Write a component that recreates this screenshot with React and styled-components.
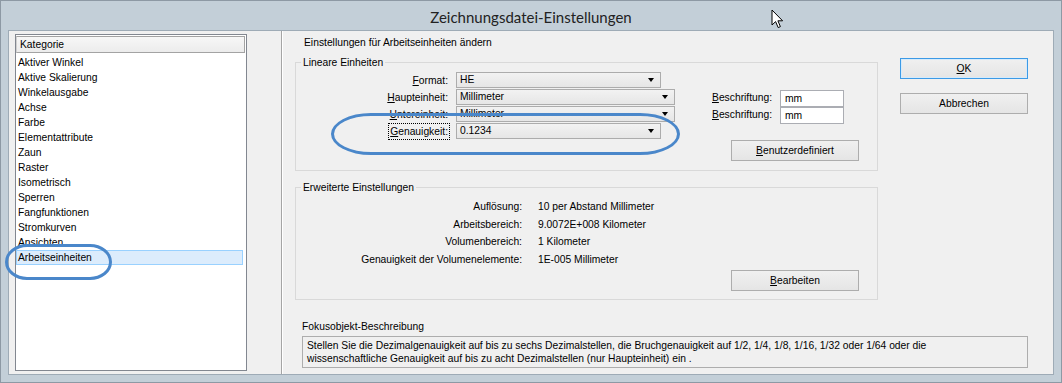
import React from "react"
import styled, { createGlobalStyle } from "styled-components"

const GlobalStyle = createGlobalStyle`
  html, body {
    margin: 0;
    padding: 0;
    background: #c3cfd8;
  }
  * {
    box-sizing: border-box;
  }
`

const Window = styled.div`
  position: relative;
  width: 1062px;
  height: 383px;
  background: #c3cfd8;
  border: 1px solid #8d99a4;
  display: flex;
  flex-direction: column;
  font-family: "Liberation Sans", Arial, sans-serif;
  font-size: 10.3px;
  color: #000;
  overflow: hidden;
`

const TitleBar = styled.div`
  height: 29px;
  flex-shrink: 0;
  display: flex;
  align-items: center;
  justify-content: center;
  padding-top: 2px;
  font-family: Lato, "Noto Sans", sans-serif;
  font-size: 15px;
  color: #222;
`

const Client = styled.div`
  flex: 1;
  margin: 0 7px 7px 7px;
  background: #f0f0f0;
  border: 1px solid #9eabb6;
  display: flex;
`

const LeftPane = styled.div`
  width: 273px;
  flex-shrink: 0;
  padding: 3px 34px 3px 6px;
  border-right: 1px solid #a5a5a5;
  display: flex;
`

const ListBox = styled.div`
  flex: 1;
  background: #fff;
  border: 1px solid #828790;
  display: flex;
  flex-direction: column;
`

const ListHeader = styled.div`
  height: 17px;
  margin-top: 1px;
  margin-right: 1px;
  padding-left: 3px;
  line-height: 15px;
  background: linear-gradient(#f7f7f7, #ececec);
  border: 1px solid #a3a3a3;
  border-left-color: #d0d0d0;
`

const ListItem = styled.div`
  height: 15px;
  line-height: 14px;
  padding-left: 1px;
  margin-right: 3px;
  border: 1px solid ${p => (p.$selected ? "#99d1ff" : "transparent")};
  background: ${p => (p.$selected ? "#dcecfc" : "transparent")};
  &:nth-child(2) {
    margin-top: 2px;
  }
`

const RightPane = styled.div`
  flex: 1;
  border-left: 1px solid #fff;
  padding: 5px 25px 0 12px;
  display: flex;
  flex-direction: column;
`

const TopArea = styled.div`
  display: flex;
  gap: 22px;
`

const MainCol = styled.div`
  width: 583px;
  display: flex;
  flex-direction: column;
`

const Heading = styled.div`
  line-height: 13px;
  margin-left: 9px;
`

const Group = styled.fieldset`
  margin: ${p => p.$top}px 0 0 0;
  padding: ${p => p.$pad};
  border: 1px solid #d9d9d9;
  min-width: 0;

  legend {
    margin-left: 5px;
    padding: 0 2px;
    line-height: 13px;
  }
`

const FormGrid = styled.div`
  display: grid;
  grid-template-columns: 160px 256px 68px 64px;
  grid-auto-rows: 17px;
  align-items: center;
`

const FieldLabel = styled.div`
  text-align: right;
  padding-right: 8px;
  white-space: nowrap;
`

const FocusText = styled.span`
  outline: 1px dotted #000;
  outline-offset: 1px;
  padding: 1px 0;
`

const Combo = styled.div`
  position: relative;
  width: ${p => p.$w}px;
  height: 16px;
  align-self: start;
  padding-left: 3px;
  line-height: 14px;
  border: 1px solid #acacac;
  background: linear-gradient(#f2f2f2, #e6e6e6);

  &::after {
    content: "";
    position: absolute;
    right: 6px;
    top: 5px;
    border-left: 3.5px solid transparent;
    border-right: 3.5px solid transparent;
    border-top: 4px solid #000;
  }
`

const SideLabel = styled.div`
  white-space: nowrap;
`

const TextInput = styled.div`
  height: 17px;
  align-self: start;
  margin-top: 1px;
  padding-left: 4px;
  line-height: 15px;
  background: #fff;
  border: 1px solid #abadb3;
`

const Button = styled.div`
  width: 128px;
  height: 21px;
  line-height: 19px;
  text-align: center;
  border: 1px solid ${p => (p.$default ? "#3c9ae6" : "#adadad")};
  background: linear-gradient(#f0f0f0, #e5e5e5);
  box-shadow: ${p => (p.$default ? "inset 0 0 0 1px #d6ebfb" : "none")};
`

const ButtonRow = styled.div`
  display: flex;
  justify-content: flex-end;
  padding-right: 18px;
  margin-top: ${p => p.$top}px;
`

const InfoGrid = styled.div`
  display: grid;
  grid-template-columns: 242px 1fr;
  grid-auto-rows: 17.5px;
  align-items: center;
`

const InfoLabel = styled.div`
  text-align: right;
  padding-right: 16px;
  white-space: nowrap;
`

const ButtonCol = styled.div`
  display: flex;
  flex-direction: column;
  padding-top: 22px;
  gap: 14px;
`

const Fokus = styled.div`
  margin: 20px 0 0 7px;
  display: flex;
  flex-direction: column;
  gap: 3px;
  line-height: 13px;
`

const DescBox = styled.div`
  height: 32px;
  padding: 2px 4px;
  line-height: 13px;
  border: 1px solid #adadad;
  background: #f0f0f0;
`

const Mark = styled.div`
  position: absolute;
  left: ${p => p.$x}px;
  top: ${p => p.$y}px;
  width: ${p => p.$w}px;
  height: ${p => p.$h}px;
  border: 3px solid #4a87ca;
  border-radius: ${p => p.$r};
  pointer-events: none;
`

const Cursor = styled.svg`
  position: absolute;
  left: 770px;
  top: 8px;
`

const categories = [
  "Aktiver Winkel",
  "Aktive Skalierung",
  "Winkelausgabe",
  "Achse",
  "Farbe",
  "Elementattribute",
  "Zaun",
  "Raster",
  "Isometrisch",
  "Sperren",
  "Fangfunktionen",
  "Stromkurven",
  "Ansichten",
  "Arbeitseinheiten"
]

const info = [
  ["Auflösung:", "10 per Abstand Millimeter"],
  ["Arbeitsbereich:", "9.0072E+008 Kilometer"],
  ["Volumenbereich:", "1 Kilometer"],
  ["Genauigkeit der Volumenelemente:", "1E-005 Millimeter"]
]

export default function App() {
  return (
    <>
      <GlobalStyle />
      <Window>
        <TitleBar>Zeichnungsdatei-Einstellungen</TitleBar>
        <Client>
          <LeftPane>
            <ListBox>
              <ListHeader>Kategorie</ListHeader>
              {categories.map(c => (
                <ListItem key={c} $selected={c === "Arbeitseinheiten"}>
                  {c}
                </ListItem>
              ))}
            </ListBox>
          </LeftPane>
          <RightPane>
            <TopArea>
              <MainCol>
                <Heading>Einstellungen für Arbeitseinheiten ändern</Heading>
                <Group $top={7} $pad="3px 0 9px 0">
                  <legend>Lineare Einheiten</legend>
                  <FormGrid>
                    <FieldLabel><u>F</u>ormat:</FieldLabel>
                    <Combo $w={205}>HE</Combo>
                    <div />
                    <div />

                    <FieldLabel><u>H</u>aupteinheit:</FieldLabel>
                    <Combo $w={219}>Millimeter</Combo>
                    <SideLabel><u>B</u>eschriftung:</SideLabel>
                    <TextInput>mm</TextInput>

                    <FieldLabel><u>U</u>ntereinheit:</FieldLabel>
                    <Combo $w={219}>Millimeter</Combo>
                    <SideLabel><u>B</u>eschriftung:</SideLabel>
                    <TextInput>mm</TextInput>

                    <FieldLabel>
                      <FocusText><u>G</u>enauigkeit:</FocusText>
                    </FieldLabel>
                    <Combo $w={205}>0.1234</Combo>
                    <div />
                    <div />
                  </FormGrid>
                  <ButtonRow $top={0}>
                    <Button><u>B</u>enutzerdefiniert</Button>
                  </ButtonRow>
                </Group>
                <Group $top={10} $pad="4px 0 8px 0">
                  <legend>Erweiterte Einstellungen</legend>
                  <InfoGrid>
                    {info.map(([k, v]) => (
                      <React.Fragment key={k}>
                        <InfoLabel>{k}</InfoLabel>
                        <div>{v}</div>
                      </React.Fragment>
                    ))}
                  </InfoGrid>
                  <ButtonRow $top={2}>
                    <Button><u>B</u>earbeiten</Button>
                  </ButtonRow>
                </Group>
              </MainCol>
              <ButtonCol>
                <Button $default><u>O</u>K</Button>
                <Button>Abbrechen</Button>
              </ButtonCol>
            </TopArea>
            <Fokus>
              <div>Fokusobjekt-Beschreibung</div>
              <DescBox>
                Stellen Sie die Dezimalgenauigkeit auf bis zu sechs Dezimalstellen, die Bruchgenauigkeit auf 1/2, 1/4, 1/8, 1/16, 1/32 oder 1/64 oder die
                <br />
                wissenschaftliche Genauigkeit auf bis zu acht Dezimalstellen (nur Haupteinheit) ein .
              </DescBox>
            </Fokus>
          </RightPane>
        </Client>

        <Mark $x={4} $y={243} $w={107} $h={36} $r="22px / 18px" />
        <Mark $x={330} $y={112} $w={349} $h={42} $r="40px / 21px" />

        <Cursor width="13" height="21" viewBox="0 0 13 21">
          <path
            d="M1 1 L1 16 L4.6 12.6 L7.2 18.6 L9.4 17.6 L6.9 11.8 L11.6 11.8 Z"
            fill="#fff"
            stroke="#000"
            strokeWidth="1"
            strokeLinejoin="miter"
          />
        </Cursor>
      </Window>
    </>
  )
}
